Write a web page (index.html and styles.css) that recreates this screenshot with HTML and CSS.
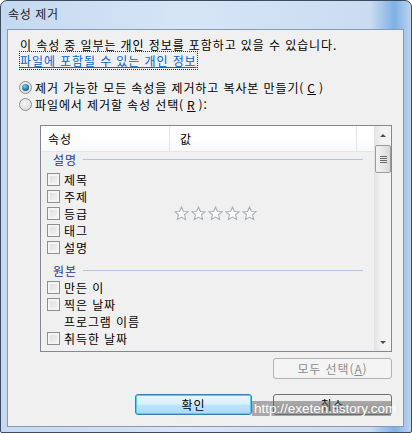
FILE: index.html
```
<!DOCTYPE html>
<html lang="ko">

<head>
    <meta charset="UTF-8">
    <meta name="viewport" content="width=device-width, initial-scale=1.0">
    <title>속성 제거</title>
    <link rel="stylesheet" href="styles.css">
</head>

<body>
    <div class="window">
        <div class="titlebar">속성 제거</div>

        <div class="client">
            <p class="intro">
                이 속성 중 일부는 개인 정보를 포함하고 있을 수 있습니다.<br>
                <a class="privacy-link" href="#">파일에 포함될 수 있는 개인 정보</a>
            </p>

            <div class="options">
                <label class="option"><span class="radio checked"></span>제거 가능한 모든 속성을 제거하고 복사본 만들기(<u>C</u>)</label>
                <label class="option"><span class="radio"></span>파일에서 제거할 속성 선택(<u>R</u>):</label>
            </div>

            <div class="listbox">
                <div class="list-main">
                    <div class="list-header">
                        <span class="col-name">속성</span>
                        <span class="col-value">값</span>
                        <span class="col-rest"></span>
                    </div>
                    <div class="list-body">
                        <div class="group first"><span>설명</span></div>
                        <div class="row"><span class="check"></span><span class="name">제목</span></div>
                        <div class="row"><span class="check"></span><span class="name">주제</span></div>
                        <div class="row">
                            <span class="check"></span><span class="name">등급</span>
                            <span class="stars">
                                <svg viewBox="0 0 14 14"><path d="M7 1 L8.8 5.1 L13 5.4 L9.8 8.2 L10.8 12.6 L7 10.3 L3.2 12.6 L4.2 8.2 L1 5.4 L5.2 5.1 Z" /></svg>
                                <svg viewBox="0 0 14 14"><path d="M7 1 L8.8 5.1 L13 5.4 L9.8 8.2 L10.8 12.6 L7 10.3 L3.2 12.6 L4.2 8.2 L1 5.4 L5.2 5.1 Z" /></svg>
                                <svg viewBox="0 0 14 14"><path d="M7 1 L8.8 5.1 L13 5.4 L9.8 8.2 L10.8 12.6 L7 10.3 L3.2 12.6 L4.2 8.2 L1 5.4 L5.2 5.1 Z" /></svg>
                                <svg viewBox="0 0 14 14"><path d="M7 1 L8.8 5.1 L13 5.4 L9.8 8.2 L10.8 12.6 L7 10.3 L3.2 12.6 L4.2 8.2 L1 5.4 L5.2 5.1 Z" /></svg>
                                <svg viewBox="0 0 14 14"><path d="M7 1 L8.8 5.1 L13 5.4 L9.8 8.2 L10.8 12.6 L7 10.3 L3.2 12.6 L4.2 8.2 L1 5.4 L5.2 5.1 Z" /></svg>
                            </span>
                        </div>
                        <div class="row"><span class="check"></span><span class="name">태그</span></div>
                        <div class="row"><span class="check"></span><span class="name">설명</span></div>
                        <div class="group"><span>원본</span></div>
                        <div class="row"><span class="check"></span><span class="name">만든 이</span></div>
                        <div class="row"><span class="check"></span><span class="name">찍은 날짜</span></div>
                        <div class="row"><span class="check hidden"></span><span class="name">프로그램 이름</span></div>
                        <div class="row"><span class="check"></span><span class="name">취득한 날짜</span></div>
                    </div>
                </div>
                <div class="scrollbar">
                    <div class="arrow up"></div>
                    <div class="thumb"><span></span><span></span><span></span><span></span></div>
                    <div class="track"></div>
                    <div class="arrow down"></div>
                </div>
            </div>

            <div class="select-all">
                <button class="button" disabled>모두 선택(<u>A</u>)</button>
            </div>

            <div class="actions">
                <button class="button default">확인</button>
                <button class="button">취소</button>
            </div>
        </div>

        <div class="watermark">http://exeten.tistory.com</div>
    </div>
</body>

</html>
```

FILE: styles.css
```
* {
    box-sizing: border-box;
}

body {
    margin: 0;
    width: 412px;
    height: 433px;
    overflow: hidden;
    font-family: "Noto Sans CJK KR", "Noto Sans", sans-serif;
    font-size: 12px;
    letter-spacing: 0.9px;
    color: #000;
}

.window {
    position: relative;
    width: 412px;
    height: 433px;
    border: 1px solid #3c4b5e;
    border-radius: 7px 7px 2px 2px;
    padding: 0 7px 5px 6px;
    background: linear-gradient(90deg, #c4d9f0 0%, #d6e5f6 45%, #cadcf1 90%, #7fb0e6 96%, #bcd4ee 100%);
}

.titlebar {
    height: 28px;
    line-height: 25px;
    padding-left: 1px;
    color: #1b1b1b;
    letter-spacing: 0.6px;
}

.client {
    height: 398px;
    border: 1px solid #8799b0;
    background-color: #f0f0f0;
    padding: 7px 11px 0 12px;
}

.intro {
    margin: 0;
    line-height: 16px;
}

.privacy-link {
    color: #0066cc;
    text-decoration: underline;
    outline: 1px dotted #333;
    outline-offset: 0;
}

.options {
    margin-top: 10px;
    display: flex;
    flex-direction: column;
}

.option {
    height: 17px;
    display: flex;
    align-items: center;
    gap: 3px;
    margin-left: -1px;
}

.radio {
    width: 13px;
    height: 13px;
    border-radius: 50%;
    border: 1px solid #8e8f8f;
    background: radial-gradient(circle at 40% 40%, #f4f4f4, #d4d4d4);
    display: flex;
    align-items: center;
    justify-content: center;
}

.radio.checked::after {
    content: "";
    width: 7px;
    height: 7px;
    border-radius: 50%;
    background: radial-gradient(circle at 40% 35%, #7ed2f2, #1f6f93 60%, #12506c);
}

.listbox {
    margin-top: 12px;
    margin-left: 20px;
    width: 352px;
    height: 227px;
    border: 1px solid #828790;
    display: flex;
    overflow: hidden;
}

.list-main {
    flex: 1;
    display: flex;
    flex-direction: column;
    min-width: 0;
}

.list-header {
    height: 26px;
    flex-shrink: 0;
    display: flex;
    background: linear-gradient(#ffffff 50%, #f7f8fa);
    border-bottom: 1px solid #e5e5e5;
}

.list-header span {
    display: flex;
    align-items: center;
    border-right: 1px solid #e3e5e8;
}

.col-name {
    width: 129px;
    padding-left: 7px;
}

.col-value {
    width: 187px;
    padding-left: 10px;
}

.col-rest {
    flex: 1;
    border-right: none !important;
}

.list-body {
    flex: 1;
    overflow: hidden;
}

.group {
    display: flex;
    align-items: center;
    gap: 6px;
    height: 14px;
    margin: 7px 11px 2px 12px;
    color: #1e3c8c;
}

.group.first {
    margin-top: 0;
    margin-bottom: 5px;
}

.group::after {
    content: "";
    flex: 1;
    height: 1px;
    background-color: #b3c3e0;
}

.row {
    height: 17px;
    display: flex;
    align-items: center;
    padding-left: 6px;
    gap: 4px;
}

.name {
    width: 106px;
}

.check {
    width: 13px;
    height: 13px;
    border: 1px solid #8f8f8f;
    background: linear-gradient(135deg, #dcdcdc, #f6f6f6);
    box-shadow: inset 0 0 0 2px #f4f4f4;
}

.check.hidden {
    visibility: hidden;
}

.stars {
    display: flex;
    gap: 2px;
}

.stars svg {
    width: 15px;
    height: 15px;
    fill: #ffffff;
    stroke: #a9adb2;
    stroke-width: 1;
}

.scrollbar {
    width: 17px;
    display: flex;
    flex-direction: column;
    background: linear-gradient(90deg, #e6e6e6, #f2f2f2 40%, #f2f2f2);
    border-left: 1px solid #e4e4e4;
}

.arrow {
    height: 17px;
    position: relative;
}

.arrow::after {
    content: "";
    position: absolute;
    left: 5px;
    border-left: 3px solid transparent;
    border-right: 3px solid transparent;
}

.arrow.up::after {
    top: 8px;
    border-bottom: 3px solid #4d4d4d;
}

.arrow.down::after {
    top: 7px;
    border-top: 3px solid #4d4d4d;
}

.thumb {
    margin: 2px 0 0 0;
    height: 28px;
    border: 1px solid #9b9b9b;
    border-radius: 2px;
    background: linear-gradient(90deg, #f3f3f3, #e8e8e8 50%, #d7d7d7);
    display: flex;
    flex-direction: column;
    align-items: center;
    justify-content: center;
    gap: 1px;
}

.thumb span {
    width: 7px;
    height: 1px;
    background-color: #6b6b6b;
}

.track {
    flex: 1;
}

.select-all {
    display: flex;
    justify-content: flex-end;
    margin-top: 6px;
}

.button {
    height: 21px;
    width: 119px;
    line-height: 17px;
    font-family: inherit;
    font-size: 12px;
    letter-spacing: 0.9px;
    color: #000;
    border: 1px solid #707070;
    border-radius: 3px;
    background: linear-gradient(#f2f2f2 0%, #ebebeb 48%, #dddddd 52%, #cfcfcf 100%);
    padding: 0;
}

.button:disabled {
    color: #8d8d8d;
    border-color: #adb2b5;
    background: #f4f4f4;
}

.button.default {
    width: 117px;
    border-color: #3c7fb1;
    background: linear-gradient(#eaf6fd 0%, #d9f0fc 48%, #bee6fd 52%, #a7d9f5 100%);
    box-shadow: inset 0 0 0 1px #48d2f7;
}

.actions {
    display: flex;
    justify-content: flex-end;
    gap: 21px;
    margin-top: 15px;
}

.watermark {
    position: absolute;
    left: 251px;
    top: 400px;
    width: 139px;
    height: 15px;
    line-height: 15px;
    padding-left: 2px;
    font-family: "Liberation Sans", sans-serif;
    font-size: 13.5px;
    letter-spacing: 0;
    color: #ffffff;
    background-color: rgba(110, 110, 110, 0.55);
    white-space: nowrap;
}
```
